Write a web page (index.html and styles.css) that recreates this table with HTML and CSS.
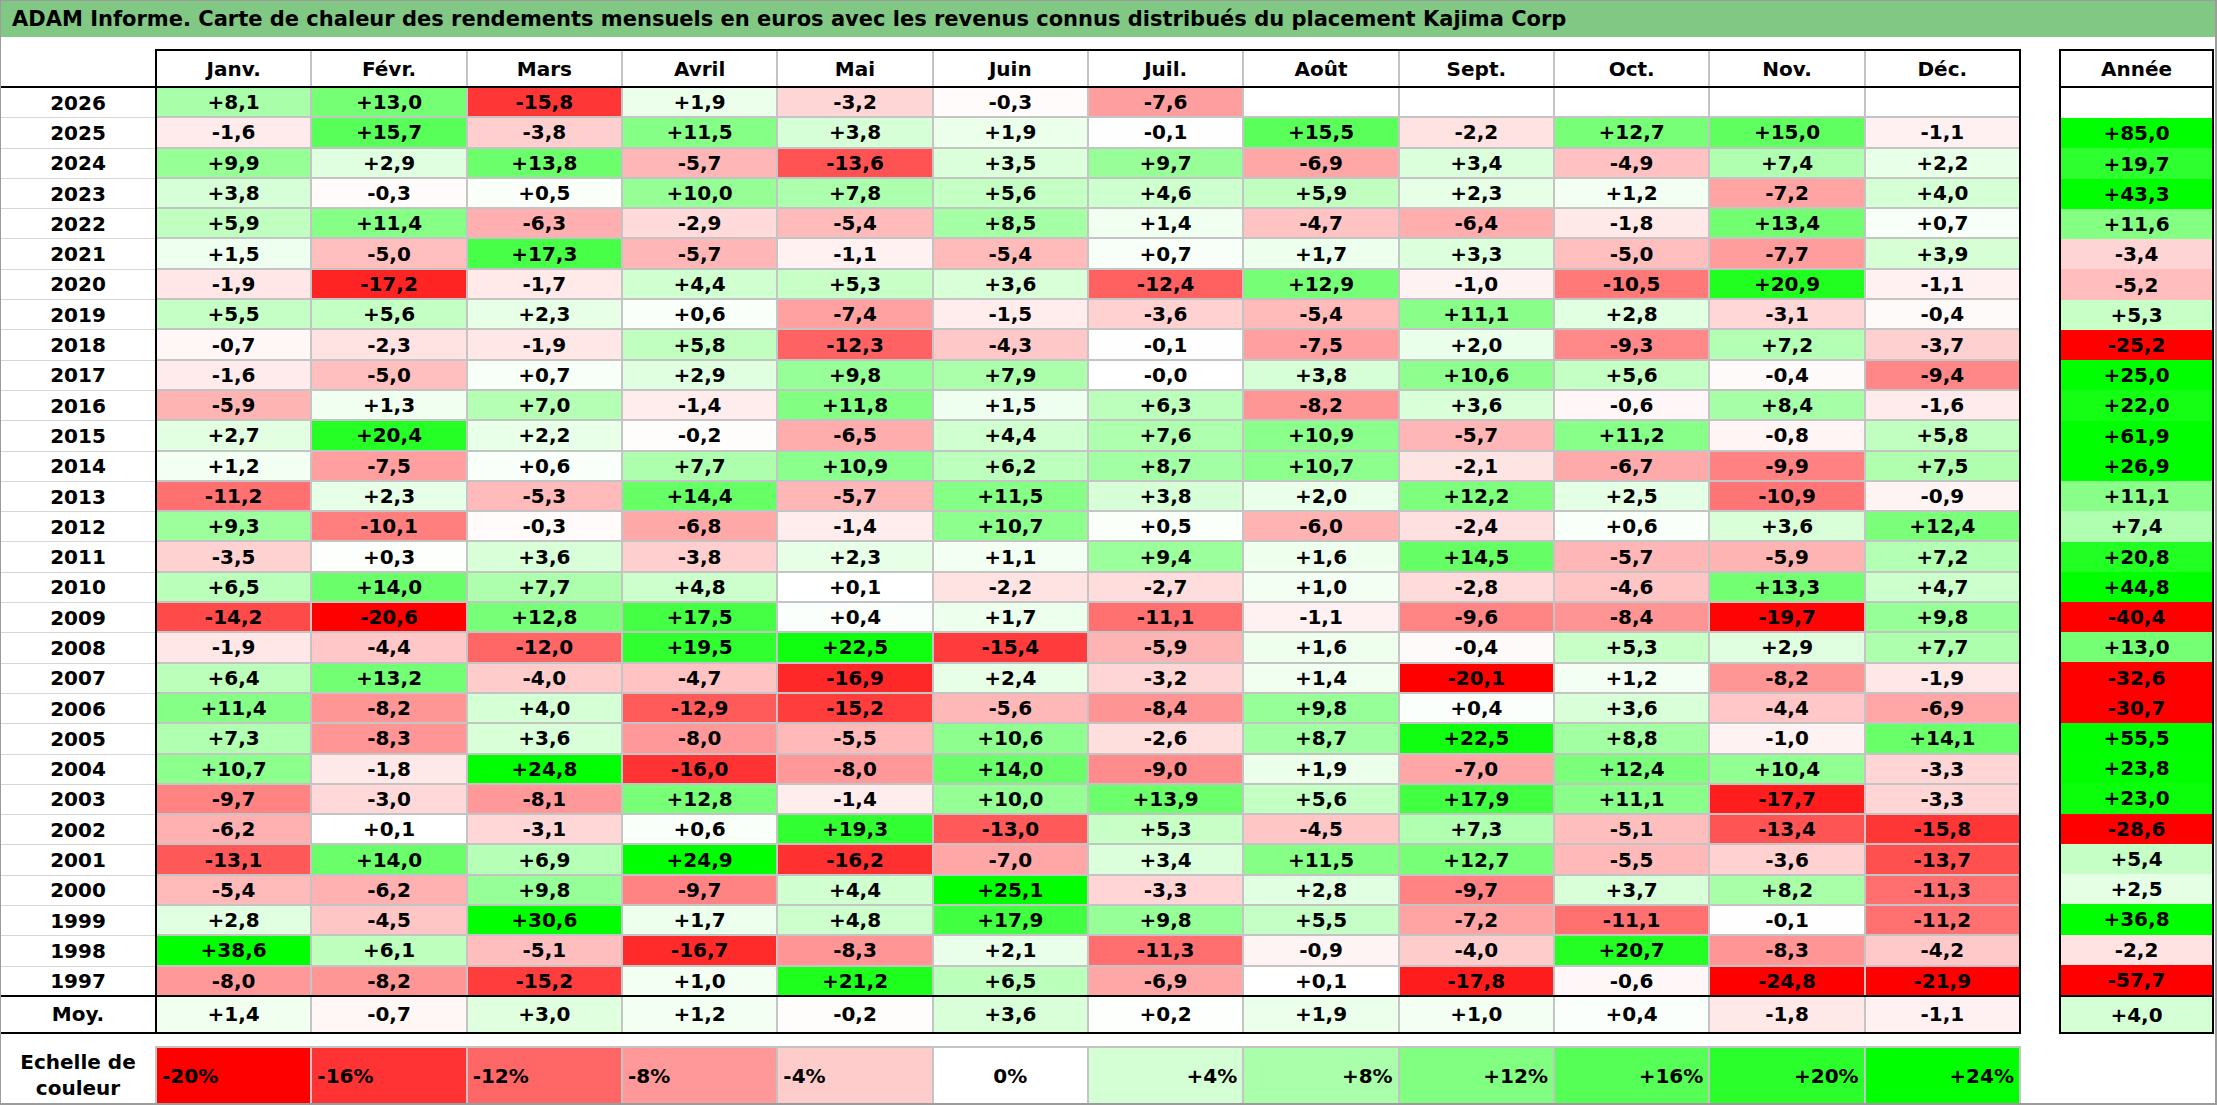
FILE: index.html
```html
<!DOCTYPE html>
<html lang="fr">
<head>
<meta charset="utf-8">
<title>ADAM Informe - Kajima Corp</title>
<link rel="stylesheet" href="styles.css">
</head>
<body>
<div class="frame">
  <div class="title">ADAM Informe. Carte de chaleur des rendements mensuels en euros avec les revenus connus distribués du placement Kajima Corp</div>
  <div class="main">
    <div class="labels" id="labels">
      <div class="lab-head"></div>
    </div>
    <div class="months">
      <div class="mhead" id="mhead"></div>
      <div class="mbody" id="mbody"></div>
      <div class="mfoot" id="mfoot"></div>
    </div>
    <div class="years">
      <div class="yhead">Année</div>
      <div class="ybody" id="ybody"></div>
      <div class="yfoot" id="yfoot"></div>
    </div>
  </div>
  <div class="scale">
    <div class="scale-label">Echelle de<br>couleur</div>
    <div class="swatches">
      <div class="sw left s-20">-20%</div>
      <div class="sw left s-16">-16%</div>
      <div class="sw left s-12">-12%</div>
      <div class="sw left s-8">-8%</div>
      <div class="sw left s-4">-4%</div>
      <div class="sw center s0">0%</div>
      <div class="sw right s4">+4%</div>
      <div class="sw right s8">+8%</div>
      <div class="sw right s12">+12%</div>
      <div class="sw right s16">+16%</div>
      <div class="sw right s20">+20%</div>
      <div class="sw right s24">+24%</div>
    </div>
  </div>
</div>
<script src="script.js"></script>
</body>
</html>
```

FILE: styles.css
```css
* { box-sizing: border-box; }

body {
  margin: 0;
  background: #ffffff;
  font-family: "DejaVu Sans", Verdana, sans-serif;
  font-weight: bold;
  color: #000000;
}

.frame {
  width: 2217px;
  height: 1105px;
  border: 1px solid #9c9c9c;
  border-right-width: 2px;
  border-bottom-width: 2px;
  overflow: hidden;
}

.title {
  height: 36px;
  background: #80c883;
  font-size: 21px;
  line-height: 37px;
  padding-left: 11px;
  white-space: nowrap;
}

.main {
  display: flex;
  align-items: flex-start;
  margin-top: 12px;
}

.labels {
  width: 154px;
  display: flex;
  flex-direction: column;
}

.lab-head {
  height: 39px;
  border-bottom: 2px solid #000;
}

.lab {
  height: 30.3px;
  border-bottom: 1px solid #d6d6d6;
  display: flex;
  align-items: center;
  justify-content: center;
  font-size: 20px;
}

.lab.last { border-bottom: 2px solid #000; }

.lab.moy {
  height: 37px;
  border-bottom: 2px solid #000;
}

.months {
  width: 1866px;
  border: 2px solid #000;
}

.mhead, .mfoot {
  display: grid;
  grid-template-columns: repeat(12, 1fr);
  column-gap: 2px;
  background: #c4c4c4;
  height: 37px;
}

.mhead { border-bottom: 2px solid #000; }
.mfoot { border-top: 2px solid #000; }

.mbody {
  display: grid;
  grid-template-columns: repeat(12, 1fr);
  grid-auto-rows: 28.3px;
  gap: 2px;
  background: #c4c4c4;
}

.cell {
  background: #ffffff;
  display: flex;
  align-items: center;
  justify-content: center;
  font-size: 20px;
  white-space: nowrap;
}

.years {
  width: 155px;
  margin-left: 38px;
  border: 2px solid #000;
}

.yhead, .yfoot {
  height: 37px;
  display: flex;
  align-items: center;
  justify-content: center;
  font-size: 20px;
}

.yhead { border-bottom: 2px solid #000; }
.yfoot { border-top: 2px solid #000; }

.ybody {
  display: grid;
  grid-template-rows: repeat(30, 1fr);
  height: 907px;
}

.scale {
  display: flex;
  margin-top: 12px;
  height: 57px;
}

.scale-label {
  width: 154px;
  display: flex;
  align-items: center;
  justify-content: center;
  text-align: center;
  font-size: 20px;
  line-height: 26px;
}

.swatches {
  width: 1866px;
  display: grid;
  grid-template-columns: repeat(12, 1fr);
  gap: 2px;
  background: #c4c4c4;
  border: 2px solid #c4c4c4;
  border-bottom: 0;
}

.sw {
  display: flex;
  align-items: center;
  font-size: 20px;
  padding: 0 5px;
}

.sw.left { justify-content: flex-start; }
.sw.center { justify-content: center; }
.sw.right { justify-content: flex-end; }

.s-20 { background: #ff0000; }
.s-16 { background: #ff3333; }
.s-12 { background: #ff6666; }
.s-8 { background: #ff9999; }
.s-4 { background: #ffcccc; }
.s0 { background: #ffffff; }
.s4 { background: #d4ffd4; }
.s8 { background: #aaffaa; }
.s12 { background: #80ff80; }
.s16 { background: #55ff55; }
.s20 { background: #2bff2b; }
.s24 { background: #00ff00; }
```

FILE: script.js
```js
(function () {
  var months = ['Janv.', 'Févr.', 'Mars', 'Avril', 'Mai', 'Juin', 'Juil.', 'Août', 'Sept.', 'Oct.', 'Nov.', 'Déc.'];
  var rows = [
    ['2026', '+8,1 +13,0 -15,8 +1,9 -3,2 -0,3 -7,6', ''],
    ['2025', '-1,6 +15,7 -3,8 +11,5 +3,8 +1,9 -0,1 +15,5 -2,2 +12,7 +15,0 -1,1', '+85,0'],
    ['2024', '+9,9 +2,9 +13,8 -5,7 -13,6 +3,5 +9,7 -6,9 +3,4 -4,9 +7,4 +2,2', '+19,7'],
    ['2023', '+3,8 -0,3 +0,5 +10,0 +7,8 +5,6 +4,6 +5,9 +2,3 +1,2 -7,2 +4,0', '+43,3'],
    ['2022', '+5,9 +11,4 -6,3 -2,9 -5,4 +8,5 +1,4 -4,7 -6,4 -1,8 +13,4 +0,7', '+11,6'],
    ['2021', '+1,5 -5,0 +17,3 -5,7 -1,1 -5,4 +0,7 +1,7 +3,3 -5,0 -7,7 +3,9', '-3,4'],
    ['2020', '-1,9 -17,2 -1,7 +4,4 +5,3 +3,6 -12,4 +12,9 -1,0 -10,5 +20,9 -1,1', '-5,2'],
    ['2019', '+5,5 +5,6 +2,3 +0,6 -7,4 -1,5 -3,6 -5,4 +11,1 +2,8 -3,1 -0,4', '+5,3'],
    ['2018', '-0,7 -2,3 -1,9 +5,8 -12,3 -4,3 -0,1 -7,5 +2,0 -9,3 +7,2 -3,7', '-25,2'],
    ['2017', '-1,6 -5,0 +0,7 +2,9 +9,8 +7,9 -0,0 +3,8 +10,6 +5,6 -0,4 -9,4', '+25,0'],
    ['2016', '-5,9 +1,3 +7,0 -1,4 +11,8 +1,5 +6,3 -8,2 +3,6 -0,6 +8,4 -1,6', '+22,0'],
    ['2015', '+2,7 +20,4 +2,2 -0,2 -6,5 +4,4 +7,6 +10,9 -5,7 +11,2 -0,8 +5,8', '+61,9'],
    ['2014', '+1,2 -7,5 +0,6 +7,7 +10,9 +6,2 +8,7 +10,7 -2,1 -6,7 -9,9 +7,5', '+26,9'],
    ['2013', '-11,2 +2,3 -5,3 +14,4 -5,7 +11,5 +3,8 +2,0 +12,2 +2,5 -10,9 -0,9', '+11,1'],
    ['2012', '+9,3 -10,1 -0,3 -6,8 -1,4 +10,7 +0,5 -6,0 -2,4 +0,6 +3,6 +12,4', '+7,4'],
    ['2011', '-3,5 +0,3 +3,6 -3,8 +2,3 +1,1 +9,4 +1,6 +14,5 -5,7 -5,9 +7,2', '+20,8'],
    ['2010', '+6,5 +14,0 +7,7 +4,8 +0,1 -2,2 -2,7 +1,0 -2,8 -4,6 +13,3 +4,7', '+44,8'],
    ['2009', '-14,2 -20,6 +12,8 +17,5 +0,4 +1,7 -11,1 -1,1 -9,6 -8,4 -19,7 +9,8', '-40,4'],
    ['2008', '-1,9 -4,4 -12,0 +19,5 +22,5 -15,4 -5,9 +1,6 -0,4 +5,3 +2,9 +7,7', '+13,0'],
    ['2007', '+6,4 +13,2 -4,0 -4,7 -16,9 +2,4 -3,2 +1,4 -20,1 +1,2 -8,2 -1,9', '-32,6'],
    ['2006', '+11,4 -8,2 +4,0 -12,9 -15,2 -5,6 -8,4 +9,8 +0,4 +3,6 -4,4 -6,9', '-30,7'],
    ['2005', '+7,3 -8,3 +3,6 -8,0 -5,5 +10,6 -2,6 +8,7 +22,5 +8,8 -1,0 +14,1', '+55,5'],
    ['2004', '+10,7 -1,8 +24,8 -16,0 -8,0 +14,0 -9,0 +1,9 -7,0 +12,4 +10,4 -3,3', '+23,8'],
    ['2003', '-9,7 -3,0 -8,1 +12,8 -1,4 +10,0 +13,9 +5,6 +17,9 +11,1 -17,7 -3,3', '+23,0'],
    ['2002', '-6,2 +0,1 -3,1 +0,6 +19,3 -13,0 +5,3 -4,5 +7,3 -5,1 -13,4 -15,8', '-28,6'],
    ['2001', '-13,1 +14,0 +6,9 +24,9 -16,2 -7,0 +3,4 +11,5 +12,7 -5,5 -3,6 -13,7', '+5,4'],
    ['2000', '-5,4 -6,2 +9,8 -9,7 +4,4 +25,1 -3,3 +2,8 -9,7 +3,7 +8,2 -11,3', '+2,5'],
    ['1999', '+2,8 -4,5 +30,6 +1,7 +4,8 +17,9 +9,8 +5,5 -7,2 -11,1 -0,1 -11,2', '+36,8'],
    ['1998', '+38,6 +6,1 -5,1 -16,7 -8,3 +2,1 -11,3 -0,9 -4,0 +20,7 -8,3 -4,2', '-2,2'],
    ['1997', '-8,0 -8,2 -15,2 +1,0 +21,2 +6,5 -6,9 +0,1 -17,8 -0,6 -24,8 -21,9', '-57,7']
  ];
  var moy = '+1,4 -0,7 +3,0 +1,2 -0,2 +3,6 +0,2 +1,9 +1,0 +0,4 -1,8 -1,1'.split(' ');
  var moyYear = '+4,0';

  function color(s) {
    if (!s) return '#ffffff';
    var v = parseFloat(s.replace(',', '.'));
    if (v > 0) {
      var g = Math.max(0, Math.round(255 * (1 - v / 24)));
      return 'rgb(' + g + ',255,' + g + ')';
    }
    if (v < 0) {
      var r = Math.max(0, Math.round(255 * (1 + v / 20)));
      return 'rgb(255,' + r + ',' + r + ')';
    }
    return '#ffffff';
  }

  function cell(text, colored) {
    var d = document.createElement('div');
    d.className = 'cell';
    d.textContent = text;
    if (colored && text) d.style.background = color(text);
    return d;
  }

  var labels = document.getElementById('labels');
  var mhead = document.getElementById('mhead');
  var mbody = document.getElementById('mbody');
  var mfoot = document.getElementById('mfoot');
  var ybody = document.getElementById('ybody');
  var yfoot = document.getElementById('yfoot');

  months.forEach(function (m) { mhead.appendChild(cell(m, false)); });

  rows.forEach(function (row, i) {
    var lab = document.createElement('div');
    lab.className = 'lab' + (i === rows.length - 1 ? ' last' : '');
    lab.textContent = row[0];
    labels.appendChild(lab);

    var vals = row[1].split(' ');
    for (var k = 0; k < 12; k++) {
      mbody.appendChild(cell(vals[k] || '', true));
    }
    ybody.appendChild(cell(row[2], true));
  });

  var moyLab = document.createElement('div');
  moyLab.className = 'lab moy';
  moyLab.textContent = 'Moy.';
  labels.appendChild(moyLab);

  moy.forEach(function (v) { mfoot.appendChild(cell(v, true)); });
  yfoot.textContent = moyYear;
  yfoot.style.background = color(moyYear);
})();
```
